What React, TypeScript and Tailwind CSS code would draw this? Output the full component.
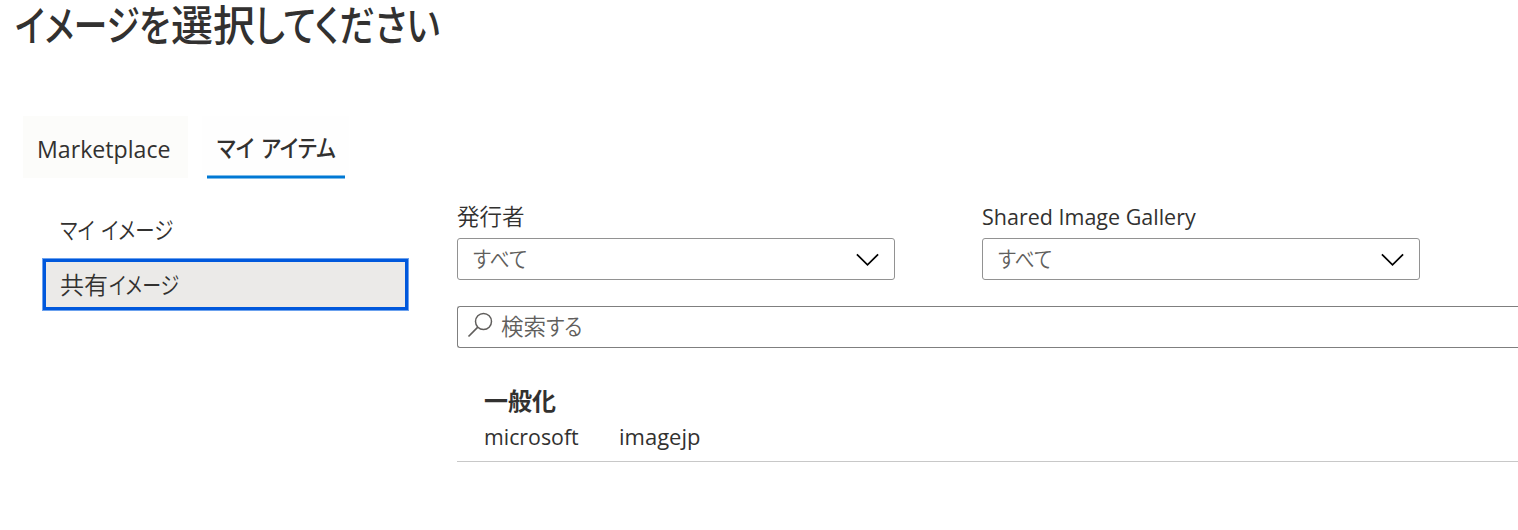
import type { ReactNode } from "react";

function Chevron() {
  return (
    <svg width="24" height="14" viewBox="0 0 24 14" fill="none" className="mr-[14px] mt-px shrink-0">
      <path d="M0.9 1.3 L11.5 11.9 L22.1 1.3" stroke="#000" strokeWidth="1.7" />
    </svg>
  );
}

function SearchIcon() {
  return (
    <svg width="26" height="26" viewBox="0 0 26 26" fill="none" className="mb-[5px] shrink-0">
      <circle cx="16.5" cy="9.5" r="8" stroke="#605e5c" strokeWidth="1.5" />
      <path d="M10.8 15.2 L1.5 24.5" stroke="#605e5c" strokeWidth="1.7" />
    </svg>
  );
}

function Select({ label, children }: { label: ReactNode; children: ReactNode }) {
  return (
    <div className="w-[438px]">
      <div className="flex h-[34px] items-center">{label}</div>
      <button className="flex h-[42px] w-full items-center justify-between rounded-[3px] border border-[#929292] bg-white pl-[15px] text-[22px] text-[#605e5c]">
        {children}
        <Chevron />
      </button>
    </div>
  );
}

export default function App() {
  return (
    <main className="h-[530px] w-full overflow-hidden bg-white font-['Open_Sans','Noto_Sans_CJK_JP',sans-serif] text-[#323130]">
      <h1 className="flex h-[50px] items-center whitespace-nowrap pb-[5px] pl-[15px] font-['Noto_Sans_CJK_JP',sans-serif] text-[42px] font-medium leading-[45px] [font-feature-settings:'palt']">
        <span className="w-[156px]">
          <span className="inline-block origin-left scale-x-[0.8]">イメージを</span>
        </span>
        <span className="w-[84px]">選択</span>
        <span className="inline-block origin-left scale-x-[0.84]">してください</span>
      </h1>

      <nav className="mt-[66px] flex h-[63px] items-start pl-[23px]">
        <button className="h-[62px] w-[165px] whitespace-nowrap bg-[#fcfcfa] pl-[14px] pt-[3px] text-left text-[24px]">
          <span className="inline-block origin-left scale-x-[0.965]">Marketplace</span>
        </button>
        <div className="ml-[14px] flex h-[63px] w-[147px] justify-center bg-[#fefefe]">
          <button className="flex h-[63px] w-[138px] flex-col whitespace-nowrap font-['Noto_Sans_CJK_JP',sans-serif] text-[24px] font-medium [font-feature-settings:'palt']">
            <span className="flex h-[59px] items-center pl-[10px] pt-[3px]">
              <span className="inline-block origin-left scale-x-[0.87] [word-spacing:3px]">マイ アイテム</span>
            </span>
            <span className="h-1 w-full border-y border-[#7cbbe9] bg-[#0078d4]" />
          </button>
        </div>
      </nav>

      <div className="flex">
        <aside className="w-[457px] shrink-0 pl-[42px] pt-[24px] font-['Noto_Sans_CJK_JP',sans-serif] text-[24px] font-[350] [font-feature-settings:'palt']">
          <div className="flex h-[55px] items-center pb-[3px] pl-[18px]">
            <span className="inline-block origin-left scale-x-[0.81] [word-spacing:3px]">マイ イメージ</span>
          </div>
          <div className="h-[53px] w-[367px] border border-[#6ba1ee]">
            <div className="flex h-full items-center border-[3px] border-[#0058dc] bg-[#ebeae8] pb-[2px] pl-[14px]">
              <span className="w-[49px]">共有</span>
              <span className="inline-block origin-left scale-x-[0.79]">イメージ</span>
            </div>
          </div>
        </aside>

        <section className="min-w-0 flex-1 pt-[25px]">
          <div className="flex gap-[87px]">
            <Select label={<span className="mb-[10px] font-['Noto_Sans_CJK_JP',sans-serif] text-[22.5px] font-[350]">発行者</span>}>
              <span className="inline-block origin-left scale-x-[0.9] pb-[3px] font-['Noto_Sans_CJK_JP',sans-serif] font-[350] [font-feature-settings:'palt']">すべて</span>
            </Select>
            <Select label={<span className="mb-[10px] inline-block origin-left scale-x-[0.977] text-[22px]">Shared Image Gallery</span>}>
              <span className="inline-block origin-left scale-x-[0.9] pb-[3px] font-['Noto_Sans_CJK_JP',sans-serif] font-[350] [font-feature-settings:'palt']">すべて</span>
            </Select>
          </div>

          <div className="mt-[26px] flex h-[42px] items-center rounded-l-[3px] border border-r-0 border-[#7f7f7f] pl-[9px] font-['Noto_Sans_CJK_JP',sans-serif] text-[22.5px] font-[350] text-[#605e5c] [font-feature-settings:'palt']">
            <SearchIcon />
            <span className="ml-[8px] w-[45px] pb-[2px]">検索</span>
            <span className="inline-block origin-left scale-x-[0.9] pb-[2px]">する</span>
          </div>

          <div className="h-[114px] border-b border-[#c8c8c8] pl-[27px] pt-[34px]">
            <div className="font-['Noto_Sans_CJK_JP',sans-serif] text-[24px] font-bold leading-[36px]">一般化</div>
            <div className="flex text-[22px] leading-[36px]">
              <span className="w-[135px]">
                <span className="inline-block origin-left scale-x-[0.97]">microsoft</span>
              </span>
              <span>imagejp</span>
            </div>
          </div>
        </section>
      </div>
    </main>
  );
}
